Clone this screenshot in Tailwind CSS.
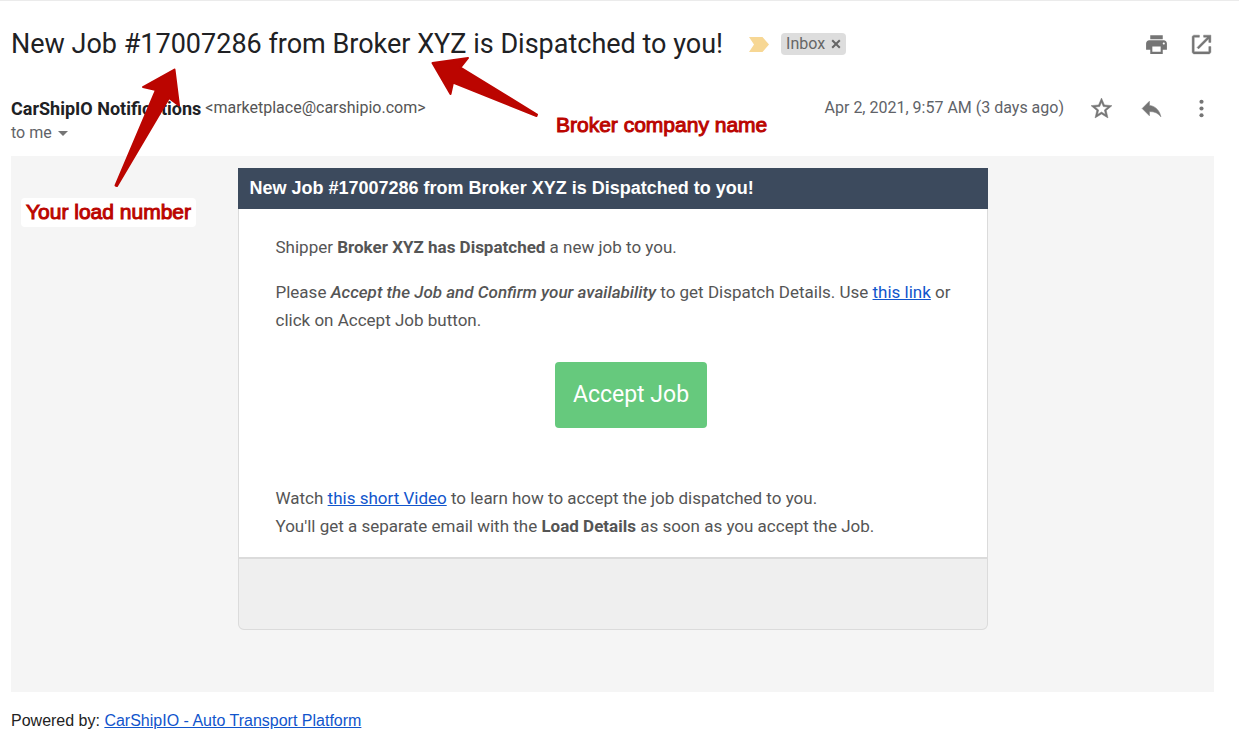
<!DOCTYPE html>
<html lang="en">
<head>
    <meta charset="UTF-8">
    <meta name="viewport" content="width=device-width, initial-scale=1.0">
    <title>New Job #17007286 from Broker XYZ is Dispatched to you!</title>
    <script src="https://cdn.jsdelivr.net/npm/@tailwindcss/browser@4"></script>
</head>
<body class="bg-white font-['Roboto',sans-serif] text-[#202124]">
    <div class="relative border-t border-[#ebebeb] pl-[11px] pr-[25px]">
        <!-- Subject -->
        <header class="flex items-center pt-6">
            <h1 class="text-[27px] leading-[38px] whitespace-nowrap">New Job #17007286 from Broker XYZ is Dispatched to you!</h1>
            <svg viewBox="0 0 20 16" class="w-5 h-4 ml-[26px] shrink-0" fill="#f7d794"><path d="M0 1H13.5L20 8.500L13.500 16H0L5 8.500Z" /></svg>
            <span class="flex items-center ml-3 h-[22px] px-[5px] rounded bg-[#ddd] text-[#666] text-[16px] leading-[22px]">
                Inbox
                <button class="ml-[6px]" aria-label="Remove label Inbox">
                    <svg viewBox="0 0 10 10" class="w-[10px] h-[10px]" fill="none" stroke="#666" stroke-width="2"><path d="M1.200 1.200L8.800 8.800M8.800 1.200L1.200 8.800" /></svg>
                </button>
            </span>
            <div class="ml-auto flex items-center gap-[20px]">
                <button aria-label="Print all">
                    <svg viewBox="0 0 24 24" class="w-[25px] h-[25px]" fill="#757575"><path d="M19 8H5c-1.660 0-3 1.340-3 3v6h4v4h12v-4h4v-6c0-1.660-1.340-3-3-3zm-3 11H8v-5h8v5zm3-7c-.55 0-1-.45-1-1s.45-1 1-1 1 .45 1 1-.45 1-1 1zm-1-9H6v4h12V3z" /></svg>
                </button>
                <button aria-label="In new window">
                    <svg viewBox="0 0 24 24" class="w-[25px] h-[25px]" fill="#757575"><path d="M19 19H5V5h5V3H5c-1.110 0-2 .9-2 2v14c0 1.100.89 2 2 2h14c1.100 0 2-.9 2-2v-5h-2v5zM14 3v2h3.590l-9.830 9.830 1.410 1.410L19 6.410V10h2V3h-7z" stroke="#757575" stroke-width=".4" /></svg>
                </button>
            </div>
        </header>

        <!-- Sender -->
        <div class="flex items-center mt-8 h-[26px]">
            <span class="text-[18px] font-bold">CarShipIO Notifications</span>
            <span class="ml-1 text-[16px] text-[#555]">&lt;marketplace@carshipio.com&gt;</span>
            <span class="ml-auto text-[16px] text-[#5f6368]">Apr 2, 2021, 9:57 AM (3 days ago)</span>
            <div class="flex items-center gap-[25px] ml-[25px]">
                <button aria-label="Star">
                    <svg viewBox="0 0 24 24" class="w-[25px] h-[25px]" fill="#757575"><path d="M22 9.240l-7.190-.62L12 2 9.190 8.630 2 9.240l5.460 4.730L5.820 21 12 17.270 18.180 21l-1.630-7.030L22 9.240zM12 15.400l-3.760 2.270 1-4.280-3.320-2.880 4.380-.38L12 6.100l1.710 4.040 4.380.38-3.320 2.880 1 4.280L12 15.400z" stroke="#757575" stroke-width=".5" /></svg>
                </button>
                <button aria-label="Reply">
                    <svg viewBox="0 0 24 24" class="w-[25px] h-[25px]" fill="#757575"><path d="M10 9V5l-7 7 7 7v-4.100c5 0 8.500 1.600 11 5.100-1-5-4-10-11-11z" stroke="#757575" stroke-width=".5" /></svg>
                </button>
                <button aria-label="More">
                    <svg viewBox="0 0 24 24" class="w-[25px] h-[25px]" fill="#757575"><circle cx="12" cy="5.500" r="2" /><circle cx="12" cy="12" r="2" /><circle cx="12" cy="18.500" r="2" /></svg>
                </button>
            </div>
        </div>
        <button class="flex items-center text-[16px] leading-6 text-[#5f6368]">
            to me
            <svg viewBox="0 0 10 5" class="w-[10px] h-[5px] ml-[6px]" fill="#757575"><path d="M0 0H10L5 5Z" /></svg>
        </button>

        <!-- Message -->
        <main class="mt-[11px] bg-[#f5f5f5] pt-3 pb-[62px]">
            <div class="max-w-[750px] mx-auto">
                <h2 class="bg-[#3c4a5d] text-white px-3 text-[18px] leading-[41px] font-bold font-['Liberation_Sans',sans-serif]">New Job #17007286 from Broker XYZ is Dispatched to you!</h2>
                <div class="bg-white border-x border-[#dbdbdb] pl-[37px] pt-6 pb-[17px] text-[17px] leading-7 text-[#555]">
                    <p>Shipper <b>Broker XYZ has Dispatched</b> a new job to you.</p>
                    <p class="mt-[17px]">Please <em class="font-medium">Accept the Job and Confirm your availability</em> to get Dispatch Details. Use <a href="#" class="text-[#1155cc] underline">this link</a> or click on Accept Job button.</p>
                    <div class="mt-7 text-center">
                        <button class="h-[66px] px-[18px] rounded bg-[#66c97d] text-white text-[23px]">Accept Job</button>
                    </div>
                    <p class="mt-14">Watch <a href="#" class="text-[#1155cc] underline">this short Video</a> to learn how to accept the job dispatched to you.<br>You'll get a separate email with the <b>Load Details</b> as soon as you accept the Job.</p>
                </div>
                <div class="h-[73px] bg-[#efefef] border border-t-2 border-[#dbdbdb] rounded-b-md"></div>
            </div>
        </main>
        <footer class="py-[17px] text-[16px] leading-6 text-[#222] font-['Liberation_Sans',sans-serif]">
            Powered by: <a href="#" class="text-[#1155cc] underline">CarShipIO - Auto Transport Platform</a>
        </footer>

        <!-- Callouts over the message -->
        <svg viewBox="0 0 560 200" class="absolute left-0 top-0 w-[560px] h-[200px] pointer-events-none" fill="#bb0500" stroke="#bb0500" stroke-width="2" stroke-linejoin="round">
            <path d="M174.500 68.500L143 86L156 89L115.500 184.500L117 185L169 97L179 104.500Z" />
            <path d="M432.500 62L468 57L460.500 66.500L537 113.500L536.500 115L453 81.500L450.500 93Z" />
        </svg>
        <span class="absolute left-[21px] top-[197px] h-[29px] px-[5px] rounded bg-white text-[#bb0500] text-[21px] leading-7 whitespace-nowrap font-['Liberation_Sans',sans-serif] [-webkit-text-stroke:1px_#bb0500]">Your load number</span>
        <span class="absolute left-[556px] top-[110px] text-[#bb0500] text-[21px] leading-7 whitespace-nowrap font-['Liberation_Sans',sans-serif] [-webkit-text-stroke:1px_#bb0500]">Broker company name</span>
    </div>
</body>
</html>
